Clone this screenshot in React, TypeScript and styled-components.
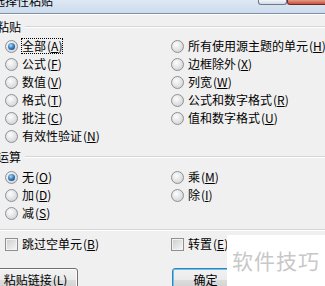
import React from "react";
import styled, { createGlobalStyle } from "styled-components";

const GlobalStyle = createGlobalStyle`
  html, body { margin: 0; padding: 0; }
  body {
    width: 325px;
    height: 286px;
    overflow: hidden;
    background: #f0f0f0;
    font-family: "Noto Sans CJK SC", "Noto Sans", sans-serif;
    font-size: 12px;
    color: #000;
  }
`;

const Dialog = styled.div`
  position: relative;
  width: 325px;
  height: 286px;
  overflow: hidden;
  background: #f0f0f0;
`;

const TitleBar = styled.div`
  display: flex;
  height: 13px;
  background: linear-gradient(#dde8f5, #ccdbed);
  border-bottom: 1px solid #7d8fa6;
  overflow: hidden;
`;

const TitleText = styled.span`
  margin: -5px 0 0 -7px;
  line-height: 12px;
  white-space: nowrap;
`;

const CaptionGroup = styled.div`
  display: flex;
  margin-left: auto;
  margin-right: -9px;
  align-self: flex-start;
`;

const CaptionButton = styled.div<{ $w: number; $close?: boolean }>`
  width: ${p => p.$w}px;
  height: 4px;
  border: 1px solid ${p => (p.$close ? "#6e2b22" : "#6d7889")};
  border-top: none;
  border-radius: 0 0 3px 3px;
  background: ${p =>
    p.$close ? "linear-gradient(#e59a84, #c7513f)" : "linear-gradient(#f3f6fa, #d3dbe6)"};
`;

const Body = styled.div`
  border-top: 1px solid #fff;
  padding-top: 5px;
`;

const Legend = styled.div<{ $mt: number }>`
  display: flex;
  align-items: center;
  height: 14px;
  line-height: 14px;
  margin: ${p => p.$mt}px 0 0 -3px;
  white-space: nowrap;
  &::after {
    content: "";
    flex: 1;
    margin-left: 4px;
    border-top: 1px solid #d5d5d5;
    border-bottom: 1px solid #fff;
  }
`;

const OptionGrid = styled.div<{ $mt: number }>`
  display: grid;
  grid-template-columns: 166px 1fr;
  grid-auto-rows: 18px;
  padding-left: 5px;
  margin-top: ${p => p.$mt}px;
`;

const Option = styled.label`
  display: flex;
  align-items: center;
  white-space: nowrap;
`;

const Radio = styled.span<{ $checked?: boolean }>`
  flex: none;
  display: flex;
  align-items: center;
  justify-content: center;
  box-sizing: border-box;
  width: 13px;
  height: 13px;
  border-radius: 50%;
  border: 1px solid #8d9095;
  background: radial-gradient(circle at 40% 35%, #fdfdfd, #d6d7d9 75%);
  &::after {
    content: "";
    display: ${p => (p.$checked ? "block" : "none")};
    width: 7px;
    height: 7px;
    border-radius: 50%;
    background: radial-gradient(circle at 40% 35%, #a9dafc, #2b70b2 55%, #0e3c6b);
  }
`;

const CheckBox = styled.span`
  flex: none;
  box-sizing: border-box;
  width: 13px;
  height: 13px;
  border: 1px solid #8e8f8f;
  background: linear-gradient(135deg, #cbcccd, #f7f7f7);
  box-shadow: inset 0 0 0 1px #f2f2f2;
`;

const Caption = styled.span<{ $focus?: boolean }>`
  margin-left: 3px;
  line-height: 14px;
  border: 1px ${p => (p.$focus ? "dotted #000" : "solid transparent")};
`;

const Accel = styled.span`
  margin-left: 1px;
`;

const Separator = styled.div`
  margin-top: 7px;
  border-top: 1px solid #d5d5d5;
  border-bottom: 1px solid #fff;
`;

const ButtonRow = styled.div`
  display: grid;
  grid-template-columns: 179px 1fr;
  margin: 15px 0 0 -7px;
`;

const Button = styled.div<{ $w: number; $default?: boolean }>`
  box-sizing: border-box;
  width: ${p => p.$w}px;
  height: 23px;
  display: flex;
  align-items: center;
  justify-content: center;
  white-space: nowrap;
  border: 1px solid ${p => (p.$default ? "#3c7fb1" : "#707070")};
  border-radius: 3px;
  background: linear-gradient(#f2f2f2 0%, #ebebeb 50%, #dddddd 51%, #cfcfcf 100%);
  box-shadow: inset 0 0 0 1px ${p => (p.$default ? "#5fc5f5" : "#fcfcfc")};
`;

const Watermark = styled.div`
  position: absolute;
  left: 227px;
  top: 235px;
  right: 0;
  bottom: 0;
  background: #fff;
  padding: 15px 0 0 5px;
  font-size: 21px;
  line-height: 21px;
  letter-spacing: 1px;
  color: #c8c8c8;
  white-space: nowrap;
`;

type Item = { text: string; key: string; checked?: boolean; focus?: boolean } | null;

const label = (text: string, key: string) => (
  <>
    {text}
    <Accel>
      (<u>{key}</u>)
    </Accel>
  </>
);

const pasteItems: Item[] = [
  { text: "全部", key: "A", checked: true, focus: true },
  { text: "所有使用源主题的单元", key: "H" },
  { text: "公式", key: "F" },
  { text: "边框除外", key: "X" },
  { text: "数值", key: "V" },
  { text: "列宽", key: "W" },
  { text: "格式", key: "T" },
  { text: "公式和数字格式", key: "R" },
  { text: "批注", key: "C" },
  { text: "值和数字格式", key: "U" },
  { text: "有效性验证", key: "N" },
  null,
];

const opItems: Item[] = [
  { text: "无", key: "O", checked: true },
  { text: "乘", key: "M" },
  { text: "加", key: "D" },
  { text: "除", key: "I" },
  { text: "减", key: "S" },
  null,
];

const RadioList = ({ items, mt }: { items: Item[]; mt: number }) => (
  <OptionGrid $mt={mt}>
    {items.map((it, i) =>
      it ? (
        <Option key={i}>
          <Radio $checked={it.checked} />
          <Caption $focus={it.focus}>{label(it.text, it.key)}</Caption>
        </Option>
      ) : (
        <span key={i} />
      )
    )}
  </OptionGrid>
);

export default function App() {
  return (
    <Dialog>
      <GlobalStyle />
      <TitleBar>
        <TitleText>选择性粘贴</TitleText>
        <CaptionGroup>
          <CaptionButton $w={27} />
          <CaptionButton $w={45} $close />
        </CaptionGroup>
      </TitleBar>
      <Body>
        <Legend $mt={0}>粘贴</Legend>
        <RadioList items={pasteItems} mt={3} />
        <Legend $mt={5}>运算</Legend>
        <RadioList items={opItems} mt={4} />
        <Separator />
        <OptionGrid $mt={4}>
          <Option>
            <CheckBox />
            <Caption>{label("跳过空单元", "B")}</Caption>
          </Option>
          <Option>
            <CheckBox />
            <Caption>{label("转置", "E")}</Caption>
          </Option>
        </OptionGrid>
        <ButtonRow>
          <Button $w={85}>{label("粘贴链接", "L")}</Button>
          <Button $w={67} $default>
            确定
          </Button>
        </ButtonRow>
      </Body>
      <Watermark>软件技巧</Watermark>
    </Dialog>
  );
}
